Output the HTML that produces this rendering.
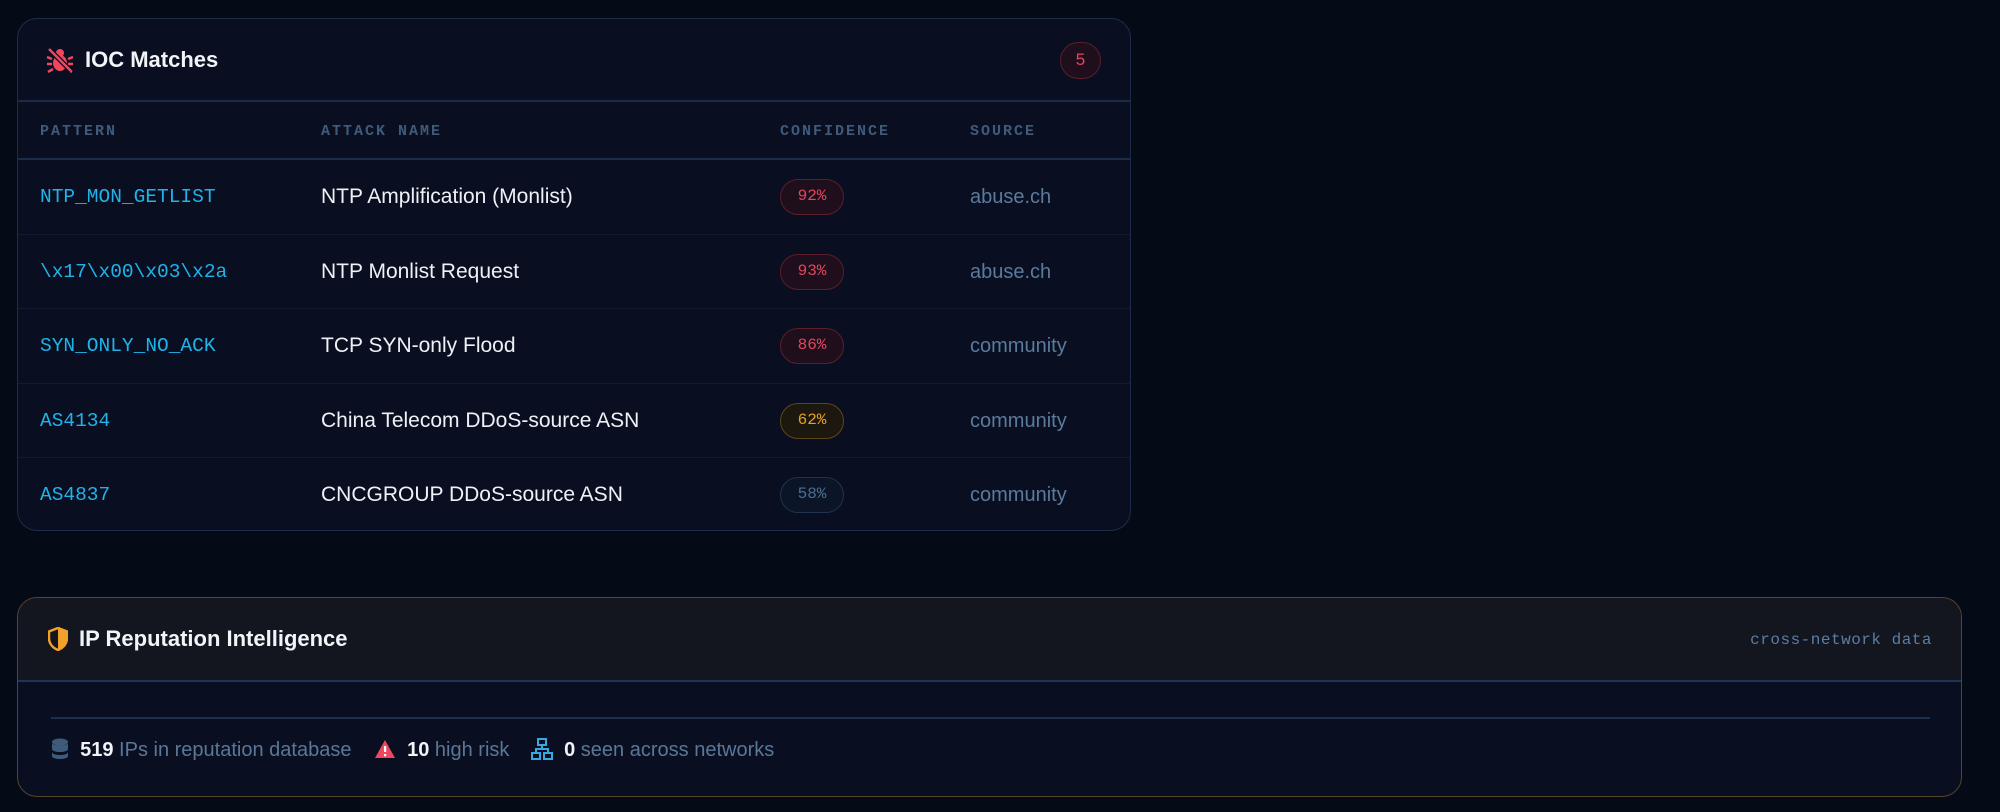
<!DOCTYPE html>
<html><head><meta charset="utf-8"><style>
*{box-sizing:border-box;margin:0;padding:0}
body{width:2000px;height:812px;background:#050a17;font-family:"Liberation Sans",sans-serif;position:relative;overflow:hidden}
.mono{font-family:"Liberation Mono",monospace}
.c1{position:absolute;left:17px;top:18px;width:1114px;height:513px;background:#090f20;border:1.5px solid #1d2c48;border-radius:20px;overflow:hidden}
.h1{position:absolute;left:0;top:0;right:0;height:83px;border-bottom:2px solid #1c2b47}
.title{position:absolute;color:#f2f4f8;font-size:22px;font-weight:bold}
.cnt{position:absolute;left:1042px;top:23px;width:41px;height:37px;border-radius:19px;border:1.5px solid #5c1e2c;background:#1f0e1b;color:#e2475c;font-size:17px;text-align:center;line-height:34px}
.th{position:absolute;top:104px;color:#3f5a7b;font-size:15px;letter-spacing:2px;font-weight:bold}
.hd{position:absolute;left:0;right:0;top:139px;border-bottom:2px solid #1c2b47}
.row{position:absolute;left:0;right:0;height:74.5px;border-bottom:1.5px solid #111a2e}
.row div{position:absolute;top:0;line-height:74px}
.p{left:22px;color:#1fb3ea;font-size:19.5px}
.a{left:303px;color:#eef1f6;font-size:21px}
.s{left:952px;color:#5a7a9e;font-size:20px}
.b{left:762px!important;top:19px!important;width:64px;height:36px;line-height:33px!important;border-radius:18px;border:1.5px solid;text-align:center;font-size:16px}
.r{color:#e3475c;border-color:#5c1e2c;background:#1f0e1b}
.y{color:#e5a321;border-color:#5e4518;background:#1c170f}
.g{color:#4a6e8f;border-color:#1d3350;background:#0b1527}
.c2{position:absolute;left:17px;top:597px;width:1945px;height:200px;background:#090f20;border:1.5px solid #5a4427;border-radius:20px;overflow:hidden}
.h2{position:absolute;left:0;top:0;right:0;height:84px;background:#13151f;border-bottom:2px solid #1f3455}
.ln{position:absolute;left:33px;top:119px;width:1879px;border-top:2px solid #1c2f4d}
.st{position:absolute;top:140px;font-size:20px;color:#5a7797;line-height:24px;white-space:nowrap}
.st b{color:#f0f3f7}
</style></head><body>
<div class="c1">
 <div class="h1">
  <svg style="position:absolute;left:28px;top:28px" width="28" height="26" viewBox="0 0 28 26">
   <circle cx="14" cy="6" r="4" fill="#f0475e"/>
   <ellipse cx="14" cy="16" rx="7" ry="8" fill="#f0475e"/>
   <path d="M6 12 L1 10 M6 17 L1 17 M7 22 L2 25 M22 12 L27 10 M22 17 L27 17 M21 22 L26 25" stroke="#f0475e" stroke-width="2.5"/>
   <path d="M3 2 L25 24" stroke="#090f20" stroke-width="5"/>
   <path d="M3 2 L25 24" stroke="#f0475e" stroke-width="2.5"/>
  </svg>
  <div class="title" style="left:67px;top:28px">IOC Matches</div>
  <div class="cnt">5</div>
 </div>
 <div class="th mono" style="left:22px">PATTERN</div>
 <div class="th mono" style="left:303px">ATTACK NAME</div>
 <div class="th mono" style="left:762px">CONFIDENCE</div>
 <div class="th mono" style="left:952px">SOURCE</div>
 <div class="hd"></div>
 <div class="row" style="top:141px"><div class="p mono">NTP_MON_GETLIST</div><div class="a">NTP Amplification (Monlist)</div><div class="b r mono">92%</div><div class="s">abuse.ch</div></div>
 <div class="row" style="top:215.5px"><div class="p mono">\x17\x00\x03\x2a</div><div class="a">NTP Monlist Request</div><div class="b r mono">93%</div><div class="s">abuse.ch</div></div>
 <div class="row" style="top:290px"><div class="p mono">SYN_ONLY_NO_ACK</div><div class="a">TCP SYN-only Flood</div><div class="b r mono">86%</div><div class="s">community</div></div>
 <div class="row" style="top:364.5px"><div class="p mono">AS4134</div><div class="a">China Telecom DDoS-source ASN</div><div class="b y mono">62%</div><div class="s">community</div></div>
 <div class="row" style="top:439px;border:none"><div class="p mono">AS4837</div><div class="a">CNCGROUP DDoS-source ASN</div><div class="b g mono">58%</div><div class="s">community</div></div>
</div>
<div class="c2">
 <div class="h2">
  <svg style="position:absolute;left:30px;top:29px" width="20" height="24" viewBox="0 0 20 24">
   <path d="M10 1 L19 4.5 V11 C19 17 15 21 10 23 C5 21 1 17 1 11 V4.5 Z" fill="none" stroke="#f0a12a" stroke-width="2.5"/>
   <path d="M10 1 L19 4.5 V11 C19 17 15 21 10 23 Z" fill="#f0a12a"/>
  </svg>
  <div class="title" style="left:61px;top:28px">IP Reputation Intelligence</div>
  <div class="mono" style="position:absolute;right:29px;top:33px;color:#5a7ea6;font-size:16px;letter-spacing:0.5px">cross-network data</div>
 </div>
 <div class="ln"></div>
 <div class="st" style="left:33px">
  <svg width="18" height="22" viewBox="0 0 18 22" style="vertical-align:-4px"><ellipse cx="9" cy="4" rx="8" ry="3.5" fill="#3f5b7c"/><path d="M1 7 C1 11 17 11 17 7 V11 C17 15 1 15 1 11Z M1 14 C1 18 17 18 17 14 V18 C17 22 1 22 1 18Z" fill="#3f5b7c"/><path d="M1 5 V8 C1 11 17 11 17 8 V5 C17 8 1 8 1 5Z" fill="#3f5b7c"/></svg>
  &nbsp;<b>519</b> IPs in reputation database
 </div>
 <div class="st" style="left:356px">
  <svg width="22" height="20" viewBox="0 0 22 20" style="vertical-align:-3px"><path d="M11 1 L21 19 H1 Z" fill="#f0475e"/><rect x="10" y="7" width="2.2" height="6" fill="#fff"/><rect x="10" y="15" width="2.2" height="2.2" fill="#fff"/></svg>
  &nbsp;<b>10</b> high risk
 </div>
 <div class="st" style="left:513px">
  <svg width="22" height="22" viewBox="0 0 22 22" style="vertical-align:-4px" fill="none" stroke="#3aa8e0" stroke-width="2"><rect x="7" y="1" width="8" height="6"/><rect x="1" y="15" width="8" height="6"/><rect x="13" y="15" width="8" height="6"/><path d="M11 7 V11 M5 15 V11 H17 V15"/></svg>
  &nbsp;<b>0</b> seen across networks
 </div>
</div>
</body></html>
